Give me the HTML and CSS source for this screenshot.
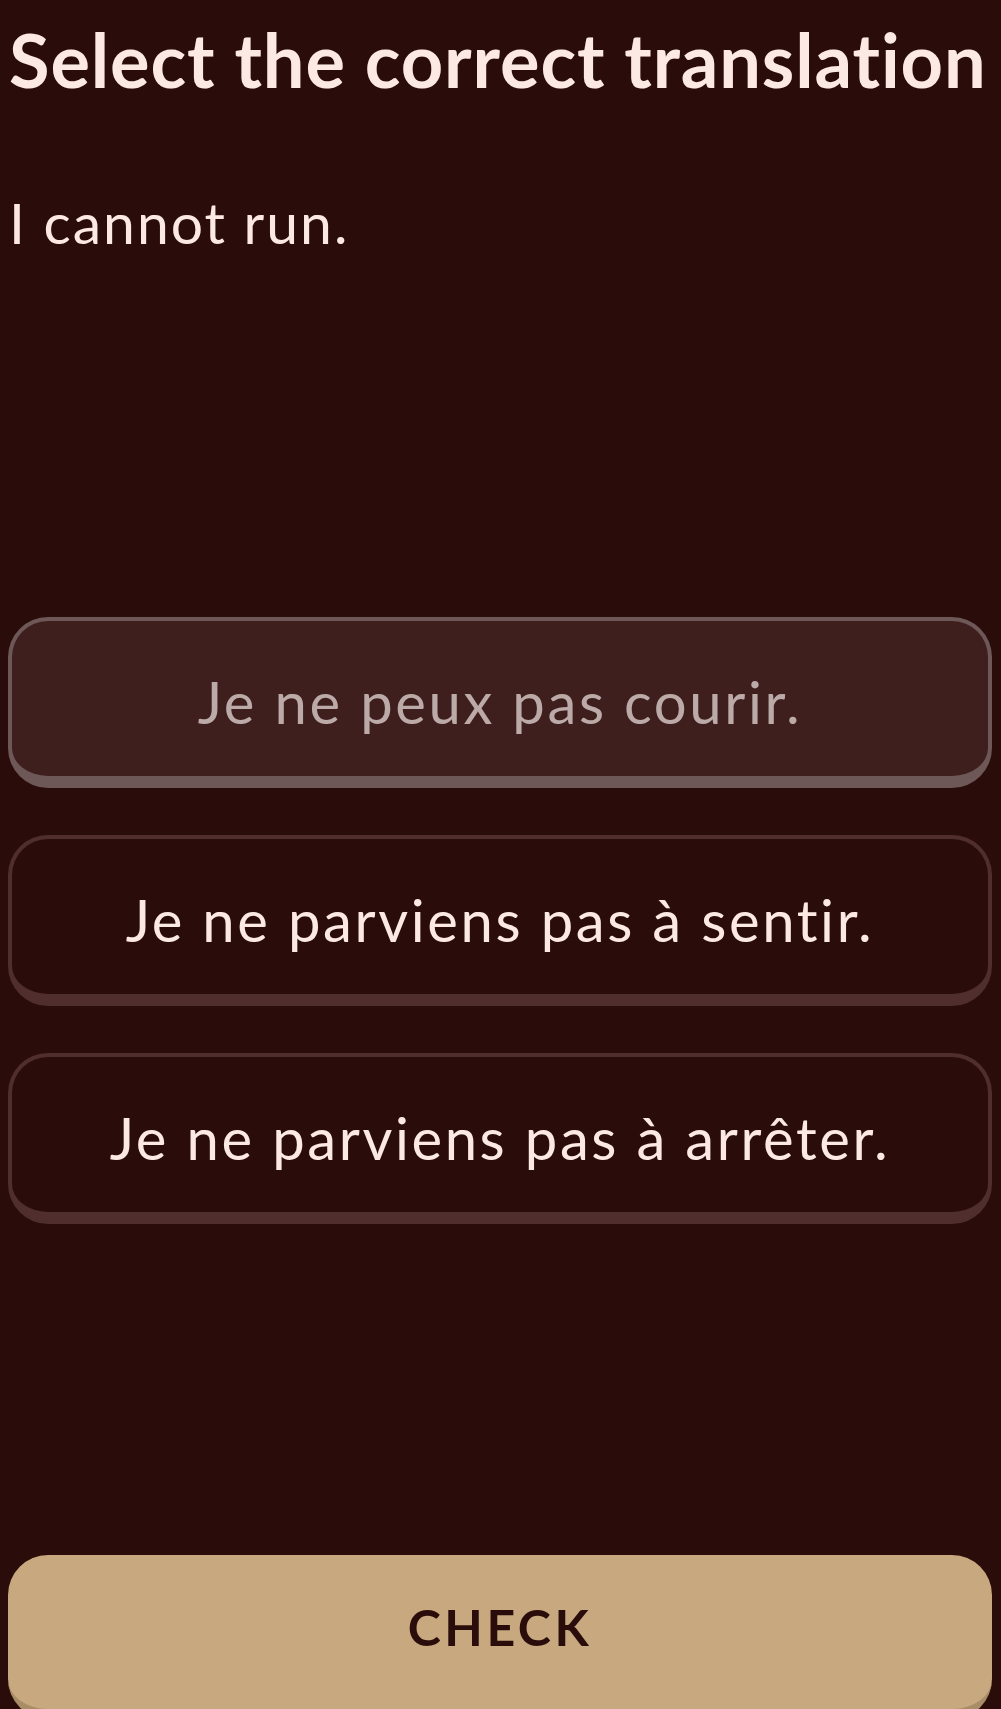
FILE: index.html
```html
<!DOCTYPE html>
<html lang="en">
<head>
<meta charset="utf-8">
<title>Select the correct translation</title>
<link rel="stylesheet" href="styles.css">
</head>
<body>
<main class="screen">
  <h1 class="title">Select the correct translation</h1>
  <p class="prompt">I cannot run.</p>
  <div class="choices">
    <button class="choice choice-selected">Je ne peux pas courir.</button>
    <button class="choice">Je ne parviens pas à sentir.</button>
    <button class="choice">Je ne parviens pas à arrêter.</button>
  </div>
  <div class="footer">
    <button class="check">CHECK</button>
  </div>
</main>
</body>
</html>
```

FILE: styles.css
```css
html, body {
  margin: 0;
  padding: 0;
  background: #2a0d0b;
}
body {
  font-family: Lato, "Open Sans", sans-serif;
  font-variant-ligatures: none;
  color: #fde9e4;
  overflow: hidden;
}
.screen {
  height: 1709px;
  box-sizing: border-box;
  padding: 0 9px 0 8px;
  display: flex;
  flex-direction: column;
}
.title {
  margin: 20px 0 0 1px;
  font-size: 74px;
  font-weight: 700;
  letter-spacing: 0.9px;
  line-height: 80px;
  color: #fde9e4;
  white-space: nowrap;
}
.prompt {
  margin: 92px 0 0 1px;
  font-size: 57px;
  font-weight: 400;
  letter-spacing: 2px;
  line-height: 60px;
}
.choices {
  margin-top: 365px;
  display: flex;
  flex-direction: column;
  gap: 47px;
}
.choice {
  height: 171px;
  box-sizing: border-box;
  border: 4px solid #4f2e2d;
  border-bottom-width: 12px;
  border-radius: 40px;
  background: #2a0d0b;
  color: #fde9e4;
  font-family: inherit;
  font-variant-ligatures: none;
  font-size: 58px;
  font-weight: 400;
  letter-spacing: 2.6px;
  padding: 6px 0 0 0;
  display: flex;
  align-items: center;
  justify-content: center;
}
.choice-selected {
  background: #3e1f1e;
  border-color: #6e5757;
  color: #bcaaa9;
}
.footer {
  margin-top: auto;
  height: 154px;
  overflow: visible;
}
.check {
  width: 100%;
  height: 164px;
  box-sizing: border-box;
  border: none;
  border-bottom: 10px solid #a98d66;
  border-radius: 40px;
  background: #c8a97f;
  color: #2a0d0b;
  font-family: inherit;
  font-size: 50px;
  font-weight: 700;
  letter-spacing: 3.5px;
  padding: 0 0 10px 0;
}
```
